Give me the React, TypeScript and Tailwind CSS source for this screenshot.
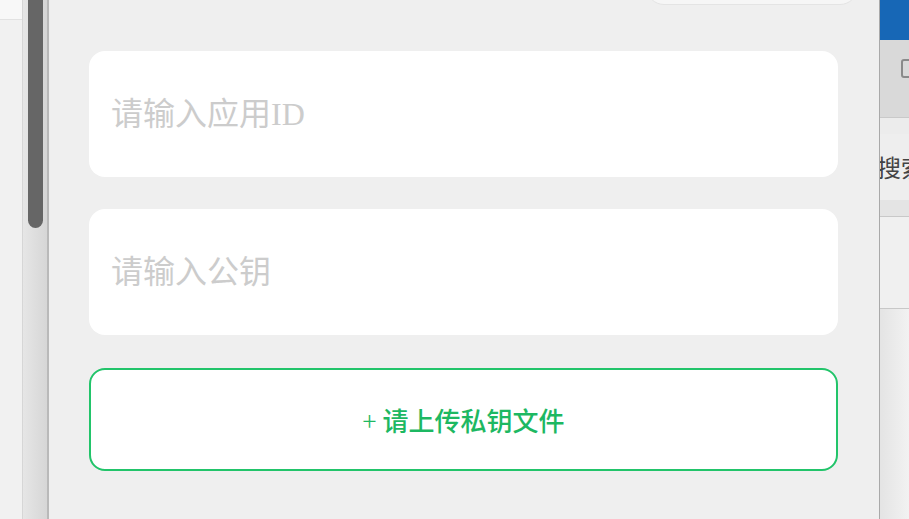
import React from "react";

export default function App() {
  const cjk = { fontFamily: '"Noto Sans CJK SC", "Noto Sans", sans-serif' };
  const ph = { fontFamily: '"Liberation Serif", "Noto Sans CJK SC", serif' };
  return (
    <div className="w-[909px] h-[519px] overflow-hidden flex bg-[#efefef]" style={cjk}>
      {/* left strip */}
      <div className="w-[22px] h-full flex flex-col bg-[#f1f1f1]">
        <div className="h-[20px] bg-[#f8f8f8] border-b border-[#e2e2e2]" />
        <div className="flex-1" />
      </div>
      <div className="w-[1px] h-full bg-[#d6d6d6]" />
      {/* scrollbar */}
      <div className="w-[24px] h-full bg-gradient-to-r from-[#e6e6e6] to-[#d6d6d6] flex justify-center pl-[1px]">
        <div className="w-[15px] h-[228px] bg-[#666666] rounded-b-[8px]" />
      </div>
      <div className="w-[2px] h-full bg-[#b9b9b9]" />
      {/* main panel */}
      <div className="w-[830px] h-full bg-[#efefef] flex flex-col pl-[40px] pr-[41px]">
        <div className="h-[51px] flex justify-end">
          <div className="w-[212px] h-[40px] mt-[-35px] mr-[-20px] bg-[#f6f6f6] border border-[#e4e4e4] rounded-[18px]" />
        </div>
        <div className="h-[126px] bg-white rounded-[16px] flex items-center pl-[22px]">
          <span className="text-[32px] leading-none text-[#cccccc]" style={ph}>请输入应用ID</span>
        </div>
        <div className="h-[32px]" />
        <div className="h-[126px] bg-white rounded-[16px] flex items-center pl-[22px]">
          <span className="text-[32px] leading-none text-[#cccccc]" style={ph}>请输入公钥</span>
        </div>
        <div className="h-[33px]" />
        <div className="h-[103px] bg-white rounded-[16px] border-2 border-[#22c46a] flex items-center justify-center">
          <span className="text-[26px] leading-none text-[#1db862] font-medium">
            <span className="font-light">+</span> 请上传私钥文件
          </span>
        </div>
      </div>
      <div className="w-[1px] h-full bg-[#a9a9a9]" />
      {/* right panel */}
      <div className="flex-1 h-full flex flex-col overflow-hidden">
        <div className="h-[40px] bg-[#1767b6]" />
        <div className="h-[78px] bg-[#d9d9d9] border-b border-[#c9c9c9] flex items-start pt-[19px] pl-[21px]">
          <div className="w-[14px] h-[19px] border-2 border-[#8a8a8a] rounded-[3px] shrink-0" />
        </div>
        <div className="h-[16px] bg-[#ececec]" />
        <div className="h-[66px] bg-[#eeeeee] flex items-center overflow-hidden">
          <span className="text-[24px] leading-none text-[#444] whitespace-nowrap ml-[-3px]">搜索</span>
        </div>
        <div className="h-[17px] bg-[#e4e4e4] border-b border-[#c8c8c8]" />
        <div className="h-[92px] bg-[#f0f0f0] border-b border-[#c8c8c8]" />
        <div className="flex-1 bg-gradient-to-r from-[#e4e4e4] to-[#f2f2f2]" />
      </div>
    </div>
  );
}
